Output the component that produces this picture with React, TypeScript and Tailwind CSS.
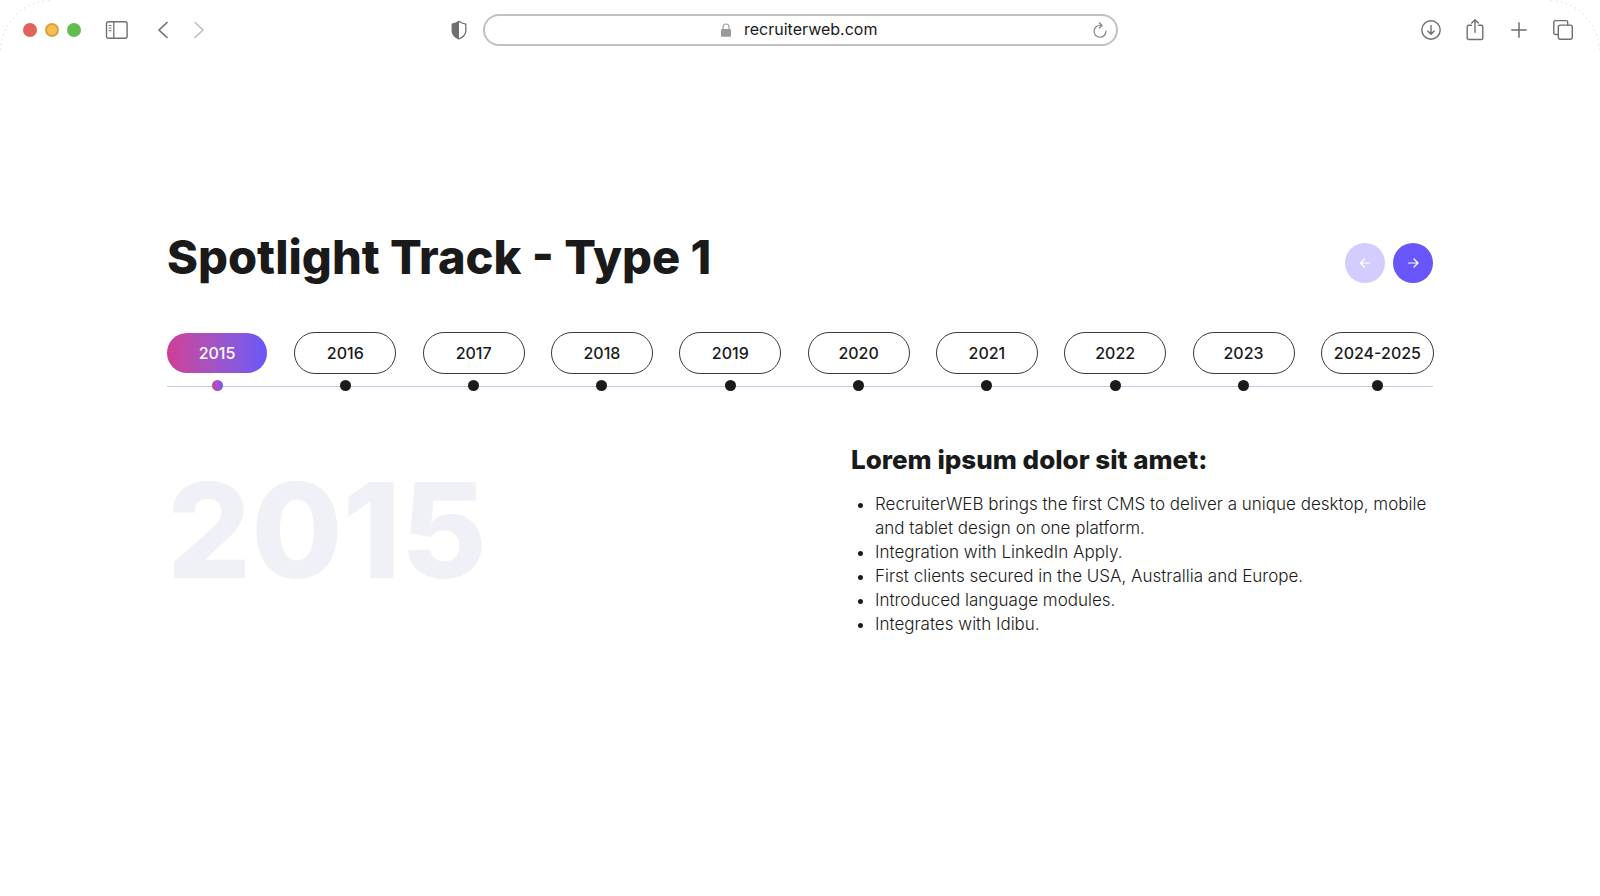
import { useState } from "react";
import clsx from "clsx";

const YEARS = ["2015", "2016", "2017", "2018", "2019", "2020", "2021", "2022", "2023", "2024-2025"];

const HIGHLIGHTS = [
  "RecruiterWEB brings the first CMS to deliver a unique desktop, mobile and tablet design on one platform.",
  "Integration with LinkedIn Apply.",
  "First clients secured in the USA, Australlia and Europe.",
  "Introduced language modules.",
  "Integrates with Idibu.",
];

const iconProps = {
  fill: "none",
  stroke: "currentColor",
  strokeLinecap: "round",
  strokeLinejoin: "round",
} as const;

function WindowCorner({ className }: { className: string }) {
  return (
    <svg className={clsx("absolute top-0 size-[52px] text-gray-300", className)} viewBox="0 0 52 52" {...iconProps}>
      <path d="M.5 50C1 25 22 1 50 .5" strokeDasharray="1 4" strokeWidth=".8" />
    </svg>
  );
}

function BrowserBar() {
  return (
    <header className="grid h-[60px] grid-cols-[1fr_minmax(0,635px)_1fr] items-center text-[#6f6f6f]">
      <div className="flex items-center pr-[15px] pl-[23px]">
        <div className="flex gap-2">
          <span className="size-[14px] rounded-full bg-[#e0645a]" />
          <span className="size-[14px] rounded-full border-2 border-[#dba13f] bg-[#f4bf4f]" />
          <span className="size-[14px] rounded-full bg-[#61bd4f]" />
        </div>
        <button aria-label="Toggle sidebar" className="ml-6">
          <svg className="h-5 w-6" viewBox="0 0 24 20" {...iconProps}>
            <rect x="1.5" y="1.7" width="20.6" height="16.6" rx="2" strokeWidth="1.4" />
            <path d="M8.8 2v16" strokeWidth="1.3" />
            <path d="M4.1 5.5h2M4.1 8.1h2M4.1 10.7h2" strokeWidth="1" />
          </svg>
        </button>
        <button aria-label="Back" className="ml-6">
          <svg className="size-5" viewBox="0 0 20 20" {...iconProps}>
            <path d="M14 2.500 6 10l8 7.500" strokeWidth="1.700" />
          </svg>
        </button>
        <button aria-label="Forward" className="ml-4 text-[#bfbfbf]">
          <svg className="size-5" viewBox="0 0 20 20" {...iconProps}>
            <path d="M6 2.500 14 10l-8 7.500" strokeWidth="1.700" />
          </svg>
        </button>
        <button aria-label="Privacy report" className="ml-auto">
          <svg className="h-5 w-[18px]" viewBox="0 0 18 20" {...iconProps}>
            <path d="M9 1.300c2.100 1.600 4.400 2.400 6.800 2.800V11c0 3.500-2.600 6-6.800 8-4.200-2-6.800-4.500-6.800-8V4.100C4.600 3.700 6.900 2.900 9 1.300Z" strokeWidth="1.300" />
            <path d="M9 1.300V19c-4.200-2-6.800-4.500-6.800-8V4.100C4.600 3.700 6.900 2.900 9 1.300Z" fill="currentColor" stroke="none" />
          </svg>
        </button>
      </div>

      <div className="flex h-8 items-center rounded-full border-2 border-[#c1c1c1] px-2">
        <span className="w-4" />
        <div className="flex flex-1 items-center justify-center gap-3">
          <svg className="h-[14px] w-3 text-[#9b9b9b]" viewBox="0 0 12 14">
            <path d="M3 6.500V4a3 3 0 0 1 6 0v2.500" fill="none" stroke="currentColor" strokeWidth="1.100" />
            <rect x="1" y="6" width="10" height="7.800" rx="1.200" fill="currentColor" />
          </svg>
          <input
            aria-label="Address"
            defaultValue="recruiterweb.com"
            className="w-[136px] pb-0.5 text-base leading-6 text-[#1a1a1a] outline-none"
          />
        </div>
        <button aria-label="Reload" className="text-[#7f7f7f]">
          <svg className="size-4" viewBox="0 0 16 16" {...iconProps}>
            <path d="M8.600 3.300A6 6 0 1 0 14 9.200" strokeWidth="1.200" />
            <path d="M7.300 .8 10 3.400 7.300 6" strokeWidth="1.200" />
          </svg>
        </button>
      </div>

      <div className="flex items-center justify-end gap-[22px] pr-[26px]">
        <button aria-label="Downloads">
          <svg className="size-[22px]" viewBox="0 0 22 22" {...iconProps} strokeWidth="1.400">
            <circle cx="11" cy="11" r="9.200" />
            <path d="M11 6.500v8.500M7.800 12l3.200 3.200 3.200-3.200" />
          </svg>
        </button>
        <button aria-label="Share">
          <svg className="size-[22px]" viewBox="0 0 22 22" {...iconProps} strokeWidth="1.400">
            <path d="M7.500 6.300H4.800a1.600 1.600 0 0 0-1.600 1.600v11a1.600 1.600 0 0 0 1.600 1.600h12.400a1.600 1.600 0 0 0 1.600-1.600v-11a1.600 1.600 0 0 0-1.600-1.600h-2.700" />
            <path d="M11 13.300V.8M7.700 4 11 .7 14.300 4" />
          </svg>
        </button>
        <button aria-label="New tab">
          <svg className="size-[22px]" viewBox="0 0 22 22" {...iconProps} strokeWidth="1.500">
            <path d="M11 3.800v14.400M3.800 11h14.400" />
          </svg>
        </button>
        <button aria-label="Tab overview">
          <svg className="size-[22px]" viewBox="0 0 22 22" {...iconProps} strokeWidth="1.400">
            <rect x="6.300" y="6.100" width="14" height="14.200" rx="2" />
            <path d="M6 15.500H3.500a1.700 1.700 0 0 1-1.700-1.700V3.300a1.700 1.700 0 0 1 1.700-1.700H14a1.700 1.700 0 0 1 1.700 1.700V6" />
          </svg>
        </button>
      </div>
    </header>
  );
}

function ArrowButton({ label, path, disabled, onClick }: { label: string; path: string; disabled: boolean; onClick: () => void }) {
  return (
    <button
      aria-label={label}
      disabled={disabled}
      onClick={onClick}
      className="flex size-10 items-center justify-center rounded-full bg-[#6956fa] text-white disabled:bg-[#d3ccfe]"
    >
      <svg className="size-3" viewBox="0 0 12 12" {...iconProps}>
        <path d={path} strokeWidth="1.200" />
      </svg>
    </button>
  );
}

export default function App() {
  const [active, setActive] = useState(0);

  return (
    <div className="relative min-h-screen bg-white font-['Inter',sans-serif] text-[#1a1a1a]">
      <WindowCorner className="left-0" />
      <WindowCorner className="right-0 -scale-x-100" />
      <BrowserBar />

      <main className="mx-auto max-w-[1266px] pt-[169px]">
        <div className="flex items-center justify-between">
          <h1 className="text-[47px] leading-[56px] font-extrabold">Spotlight Track - Type 1</h1>
          <div className="flex gap-2 pt-3">
            <ArrowButton
              label="Previous"
              path="M11 6H1.500M5.500 2 1.500 6l4 4"
              disabled={active === 0}
              onClick={() => setActive(active - 1)}
            />
            <ArrowButton
              label="Next"
              path="M1.500 6H11M7 2l4 4-4 4"
              disabled={active === YEARS.length - 1}
              onClick={() => setActive(active + 1)}
            />
          </div>
        </div>

        <nav className="mt-12">
          <div className="flex justify-between bg-[linear-gradient(#bccbdc,#bccbdc)] bg-[length:100%_1px] bg-[position:0_53px] bg-no-repeat">
            {YEARS.map((year, i) => (
              <div key={year} className="flex flex-col items-center gap-[7px]">
                <button
                  onClick={() => setActive(i)}
                  className={clsx(
                    "h-10 min-w-[100px] rounded-full px-3 text-base font-medium",
                    i === active
                      ? "bg-linear-to-r from-[#d03c94] to-[#6956fa] text-white"
                      : "outline outline-[#3a3a3a]"
                  )}
                >
                  {year}
                </button>
                <span
                  className={clsx(
                    "size-[11px] rounded-full",
                    i === active ? "bg-linear-to-r from-[#d03c94] to-[#6956fa]" : "bg-[#1a1a1a]"
                  )}
                />
              </div>
            ))}
          </div>
        </nav>

        <section className="mt-[53px] grid grid-cols-2 gap-[102px]">
          <p className="pt-2 text-[132px] leading-[156px] font-extrabold text-[#f0f1f6]">{YEARS[active]}</p>
          <div>
            <h2 className="text-[26px] leading-8 font-extrabold">Lorem ipsum dolor sit amet:</h2>
            <ul className="mt-4 list-disc pl-6 text-[17px] leading-6 font-light">
              {HIGHLIGHTS.map((item) => (
                <li key={item}>{item}</li>
              ))}
            </ul>
          </div>
        </section>
      </main>
    </div>
  );
}
